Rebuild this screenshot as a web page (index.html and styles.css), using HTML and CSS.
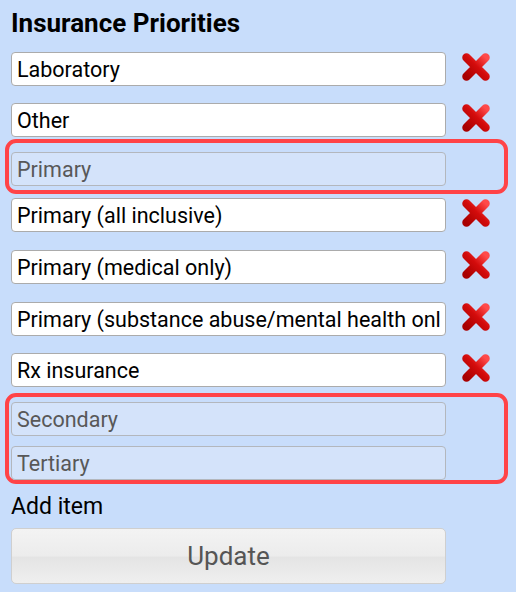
FILE: index.html
```html
<!DOCTYPE html>
<html>
<head>
<meta charset="utf-8">
<link rel="stylesheet" href="styles.css">
</head>
<body>
<div class="page">
  <h1 class="title">Insurance Priorities</h1>
  <div class="row first">
    <input class="field" type="text" value="Laboratory">
    <svg class="del" viewBox="0 0 30 30"><use href="#x"/></svg>
  </div>
  <div class="row gap17">
    <input class="field" type="text" value="Other">
    <svg class="del" viewBox="0 0 30 30"><use href="#x"/></svg>
  </div>
  <div class="group group-a">
    <div class="row">
      <input class="field" type="text" value="Primary" disabled>
    </div>
  </div>
  <div class="row gap4">
    <input class="field" type="text" value="Primary (all inclusive)">
    <svg class="del" viewBox="0 0 30 30"><use href="#x"/></svg>
  </div>
  <div class="row gap18">
    <input class="field" type="text" value="Primary (medical only)">
    <svg class="del" viewBox="0 0 30 30"><use href="#x"/></svg>
  </div>
  <div class="row gap18">
    <input class="field" type="text" value="Primary (substance abuse/mental health only)">
    <svg class="del" viewBox="0 0 30 30"><use href="#x"/></svg>
  </div>
  <div class="row gap17">
    <input class="field" type="text" value="Rx insurance">
    <svg class="del" viewBox="0 0 30 30"><use href="#x"/></svg>
  </div>
  <div class="group group-b">
    <div class="row">
      <input class="field" type="text" value="Secondary" disabled>
    </div>
    <div class="row gap10">
      <input class="field" type="text" value="Tertiary" disabled>
    </div>
  </div>
  <div class="add">Add item</div>
  <button class="update" type="button">Update</button>
</div>
<svg class="defs" width="0" height="0">
  <defs>
    <linearGradient id="xg" x1="0" y1="1" x2="1" y2="0">
      <stop offset="0" stop-color="#a80000"/>
      <stop offset="0.55" stop-color="#d40c0c"/>
      <stop offset="1" stop-color="#ff4a4a"/>
    </linearGradient>
    <g id="x">
      <path d="M5.5 5.5 L24.5 24.5 M24.5 5.5 L5.5 24.5" stroke="url(#xg)" stroke-width="8.5" stroke-linecap="round" fill="none"/>
    </g>
  </defs>
</svg>
</body>
</html>
```
FILE: styles.css
```css
html, body {
  margin: 0;
  padding: 0;
}
body {
  background: #c8ddfb;
  font-family: Roboto, "Liberation Sans", sans-serif;
  color: #000;
  width: 516px;
  height: 592px;
  overflow: hidden;
}
.page {
  display: flex;
  flex-direction: column;
  padding-left: 5px;
}
.title {
  margin: 8px 0 0 6px;
  font-size: 26px;
  line-height: 30px;
  font-weight: 700;
}
.row {
  display: flex;
  align-items: center;
  height: 34px;
  padding-left: 6px;
}
.group .row {
  padding-left: 2px;
}
.first { margin-top: 14px; }
.gap17 { margin-top: 17px; }
.gap18 { margin-top: 18px; }
.gap4 { margin-top: 4px; }
.gap10 { margin-top: 10px; }
.field {
  box-sizing: border-box;
  width: 435px;
  height: 34px;
  margin: 0;
  padding: 0 5px;
  border: 1px solid #ababab;
  border-radius: 4px;
  background: #fff;
  font-family: Roboto, "Liberation Sans", sans-serif;
  font-size: 21.5px;
  color: #000;
  outline: none;
}
.field:disabled {
  background: #d4e3fa;
  color: #585858;
  border-color: #b3b7bd;
}
.del {
  width: 30px;
  height: 30px;
  margin-left: 15px;
  margin-top: -4px;
}
.group {
  width: 503px;
  box-sizing: border-box;
  border: 4px solid #ff4347;
  border-radius: 11px;
}
.group-a {
  margin-top: 2px;
  padding: 9px 0 4px 0;
}
.group-b {
  margin-top: 6px;
  padding: 5px 0 0 0;
}
.add {
  margin: 10px 0 0 6px;
  font-size: 23px;
  line-height: 26px;
}
.update {
  box-sizing: border-box;
  margin: 8px 0 0 6px;
  width: 435px;
  height: 56px;
  border: 1px solid #cfcfcf;
  border-radius: 5px;
  background: linear-gradient(#f3f3f3 0%, #ececec 50%, #e4e4e4 52%, #efefef 100%);
  font-family: Roboto, "Liberation Sans", sans-serif;
  font-size: 26px;
  color: #555;
  padding: 0;
}
.defs {
  position: absolute;
}
```
